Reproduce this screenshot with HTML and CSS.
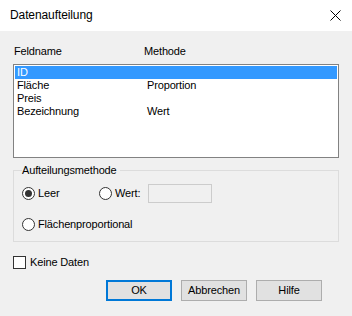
FILE: index.html
```html
<!DOCTYPE html>
<html lang="de">
<head>
<meta charset="utf-8">
<title>Datenaufteilung</title>
<link rel="stylesheet" href="styles.css">
</head>
<body>
<div class="window">
  <div class="titlebar">
    <span class="title">Datenaufteilung</span>
    <svg class="close" width="11" height="11" viewBox="0 0 11 11"><path d="M0.5 0.5 L10.5 10.5 M10.5 0.5 L0.5 10.5" stroke="#000" stroke-width="1" fill="none"/></svg>
  </div>
  <div class="main">
    <div class="header">
      <span>Feldname</span>
      <span>Methode</span>
    </div>
    <div class="list">
      <div class="row selected"><span>ID</span><span></span></div>
      <div class="row"><span>Fläche</span><span>Proportion</span></div>
      <div class="row"><span>Preis</span><span></span></div>
      <div class="row"><span>Bezeichnung</span><span>Wert</span></div>
    </div>
    <fieldset class="group">
      <legend>Aufteilungsmethode</legend>
      <div class="radio-row">
        <label class="radio leer"><span class="circle checked"></span><span>Leer</span></label>
        <label class="radio"><span class="circle"></span><span>Wert:</span></label>
        <span class="textbox"></span>
      </div>
      <div class="radio-row second">
        <label class="radio"><span class="circle"></span><span>Flächenproportional</span></label>
      </div>
    </fieldset>
    <label class="check"><span class="box"></span><span>Keine Daten</span></label>
    <div class="buttons">
      <span class="btn default">OK</span>
      <span class="btn">Abbrechen</span>
      <span class="btn">Hilfe</span>
    </div>
  </div>
</div>
</body>
</html>
```
FILE: styles.css
```css
html, body {
  margin: 0;
  padding: 0;
}
body {
  width: 352px;
  height: 316px;
  overflow: hidden;
  background: #f0f0f0;
  font-family: "Liberation Sans", Arial, sans-serif;
  font-size: 11px;
  letter-spacing: -0.15px;
  color: #000;
}
.window {
  width: 352px;
  height: 316px;
  background: #f0f0f0;
}
.titlebar {
  height: 31px;
  background: #fff;
  display: flex;
  align-items: center;
  justify-content: space-between;
  padding: 0 10px 0 10px;
  box-sizing: border-box;
}
.title {
  font-size: 12px;
  line-height: 15px;
  letter-spacing: -0.1px;
  color: #000;
}
.close {
  display: block;
  margin-right: 1px;
  margin-top: -1px;
}
.main {
  padding: 14px 13px 0 13px;
}
.header {
  display: grid;
  grid-template-columns: 130px 1fr;
  padding-left: 1px;
  line-height: 13px;
  margin-bottom: 6px;
}
.list {
  height: 94px;
  box-sizing: border-box;
  border: 1px solid #828282;
  background: #fff;
  padding: 1px;
}
.row {
  display: grid;
  grid-template-columns: 130px 1fr;
  height: 13px;
  line-height: 13px;
  padding-left: 2px;
  white-space: nowrap;
}
.row.selected {
  background: #3399ff;
  color: #fff;
}
.group {
  margin: 6px 0 0 0;
  min-width: 0;
  border: 1px solid #dcdcdc;
  padding: 7px 8px 10px 8px;
}
.group legend {
  padding: 0 3px 0 0;
  line-height: 13px;
}
.radio-row {
  display: flex;
  align-items: center;
  height: 19px;
}
.radio-row.second {
  height: 13px;
  margin-top: 15px;
}
.radio {
  display: flex;
  align-items: center;
  gap: 3px;
  line-height: 13px;
}
.radio.leer {
  width: 77px;
}
.circle {
  width: 13px;
  height: 13px;
  box-sizing: border-box;
  border: 1px solid #333;
  border-radius: 50%;
  background: #fff;
  position: relative;
}
.circle.checked::after {
  content: "";
  position: absolute;
  left: 2px;
  top: 2px;
  width: 7px;
  height: 7px;
  border-radius: 50%;
  background: #333;
}
.textbox {
  margin-left: 8px;
  width: 64px;
  height: 19px;
  box-sizing: border-box;
  border: 1px solid #cccccc;
  background: #f0f0f0;
}
.check {
  display: flex;
  align-items: center;
  gap: 4px;
  margin-top: 14px;
  line-height: 13px;
}
.box {
  width: 13px;
  height: 13px;
  box-sizing: border-box;
  border: 1px solid #333;
  background: #fff;
}
.buttons {
  display: flex;
  justify-content: flex-end;
  gap: 9px;
  margin-top: 11px;
  padding-right: 17px;
}
.btn {
  width: 66px;
  height: 21px;
  box-sizing: border-box;
  border: 1px solid #adadad;
  background: #e1e1e1;
  display: flex;
  align-items: center;
  justify-content: center;
  line-height: 13px;
}
.btn.default {
  border: 2px solid #0078d7;
}
```
